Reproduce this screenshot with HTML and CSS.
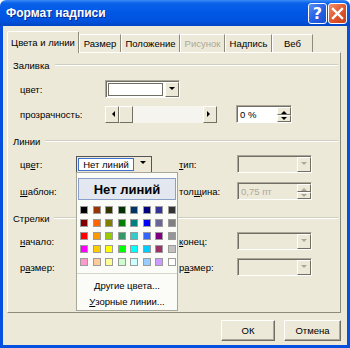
FILE: index.html
```html
<!DOCTYPE html>
<html>
<head>
    <title>Формат надписи</title>
    <link rel="stylesheet" href="styles.css">
</head>
<body>
    <div class="dialog">
        <div class="titlebar">
            <span class="title">Формат надписи</span>
            <div class="caption-btns">
                <span class="cap-btn help">?</span>
                <span class="cap-btn close">
                    <svg width="13" height="13" viewBox="0 0 13 13"><path d="M2 2 L11 11 M11 2 L2 11" stroke="#fff" stroke-width="2.4" stroke-linecap="square"/></svg>
                </span>
            </div>
        </div>
        <div class="window-body">
            <div class="tabs">
                <div class="tab active" style="width:72px">Цвета и линии</div>
                <div class="tab" style="width:42px">Размер</div>
                <div class="tab" style="width:59px">Положение</div>
                <div class="tab disabled" style="width:45px">Рисунок</div>
                <div class="tab" style="width:47px">Надпись</div>
                <div class="tab" style="width:41px">Веб</div>
            </div>
            <div class="panel">
                <div class="group-head g1"><span>Заливка</span><div class="rule"></div></div>
                <div class="row r1">
                    <span class="label wide">цвет:</span>
                    <div class="combo fill-combo">
                        <div class="field"></div>
                        <div class="drop-btn"><i class="arr-down"></i></div>
                    </div>
                </div>
                <div class="row r2">
                    <span class="label wide">прозрачность:</span>
                    <div class="slider">
                        <div class="sbtn"><i class="arr-left"></i></div>
                        <div class="thumb"></div>
                        <div class="track"></div>
                        <div class="sbtn"><i class="arr-right"></i></div>
                    </div>
                    <div class="spin pct">
                        <div class="field">0 %</div>
                        <div class="spin-btns">
                            <div class="sb"><i class="arr-up"></i></div>
                            <div class="sb"><i class="arr-down"></i></div>
                        </div>
                    </div>
                </div>

                <div class="group-head g2"><span>Линии</span><div class="rule"></div></div>
                <div class="row r3">
                    <span class="label">цв<u>е</u>т:</span>
                    <div class="left-ctl">
                        <div class="combo line-combo">
                            <div class="field focus">Нет линий</div>
                            <div class="drop-btn"><i class="arr-down"></i></div>
                        </div>
                    </div>
                    <span class="label right"><u>т</u>ип:</span>
                    <div class="combo off">
                        <div class="field"></div>
                        <div class="drop-btn"><i class="arr-down"></i></div>
                    </div>
                </div>
                <div class="row r4">
                    <span class="label"><u>ш</u>аблон:</span>
                    <div class="left-ctl"></div>
                    <span class="label right">тол<u>щ</u>ина:</span>
                    <div class="spin off">
                        <div class="field">0,75 пт</div>
                        <div class="spin-btns">
                            <div class="sb"><i class="arr-up"></i></div>
                            <div class="sb"><i class="arr-down"></i></div>
                        </div>
                    </div>
                </div>

                <div class="group-head g3"><span>Стрелки</span><div class="rule"></div></div>
                <div class="row r5">
                    <span class="label"><u>н</u>ачало:</span>
                    <div class="left-ctl"></div>
                    <span class="label right"><u>к</u>онец:</span>
                    <div class="combo off">
                        <div class="field"></div>
                        <div class="drop-btn"><i class="arr-down"></i></div>
                    </div>
                </div>
                <div class="row r6">
                    <span class="label">р<u>а</u>змер:</span>
                    <div class="left-ctl"></div>
                    <span class="label right">р<u>а</u>змер:</span>
                    <div class="combo off">
                        <div class="field"></div>
                        <div class="drop-btn"><i class="arr-down"></i></div>
                    </div>
                </div>

                <!-- выпадающая палитра цвета линии -->
                <div class="popup">
                    <div class="no-line">Нет линий</div>
                    <div class="swatches">
                        <i style="background:#000000"></i><i style="background:#993300"></i><i style="background:#333300"></i><i style="background:#003300"></i><i style="background:#003366"></i><i style="background:#000080"></i><i style="background:#333399"></i><i style="background:#333333"></i>
                        <i style="background:#800000"></i><i style="background:#ff6600"></i><i style="background:#808000"></i><i style="background:#008000"></i><i style="background:#008080"></i><i style="background:#0000ff"></i><i style="background:#666699"></i><i style="background:#808080"></i>
                        <i style="background:#ff0000"></i><i style="background:#ff9900"></i><i style="background:#99cc00"></i><i style="background:#339966"></i><i style="background:#33cccc"></i><i style="background:#3366ff"></i><i style="background:#800080"></i><i style="background:#969696"></i>
                        <i style="background:#ff00ff"></i><i style="background:#ffcc00"></i><i style="background:#ffff00"></i><i style="background:#00ff00"></i><i style="background:#00ffff"></i><i style="background:#00ccff"></i><i style="background:#993366"></i><i style="background:#c0c0c0"></i>
                        <i style="background:#ff99cc"></i><i style="background:#ffcc99"></i><i style="background:#ffff99"></i><i style="background:#ccffcc"></i><i style="background:#ccffff"></i><i style="background:#99ccff"></i><i style="background:#cc99ff"></i><i style="background:#ffffff"></i>
                    </div>
                    <div class="sep"></div>
                    <div class="menu-item"><u>Д</u>ругие цвета...</div>
                    <div class="menu-item"><u>У</u>зорные линии...</div>
                </div>
            </div>
            <div class="buttons">
                <div class="btn ok">ОК</div>
                <div class="btn cancel">Отмена</div>
            </div>
        </div>
    </div>
</body>
</html>
```

FILE: styles.css
```css
body {
    margin: 0;
    font-family: "Liberation Sans", Arial, sans-serif;
    font-size: 9.5px;
    color: #000;
}
u {
    text-decoration: underline;
    text-underline-offset: 1px;
}
.dialog {
    width: 350px;
    height: 348px;
    display: flex;
    flex-direction: column;
}

/* заголовок окна */
.titlebar {
    height: 26px;
    flex: none;
    display: flex;
    align-items: center;
    padding-left: 6px;
    background: linear-gradient(to bottom, #3d8cf7 0%, #0a62ea 12%, #0058e6 45%, #0052de 80%, #0046c4 100%);
    border-radius: 6px 6px 0 0;
}
.title {
    color: #fff;
    font-weight: bold;
    font-size: 12px;
    text-shadow: 1px 1px 0 #0b2a8c;
    flex: 1;
}
.caption-btns {
    display: flex;
    gap: 1px;
    margin-right: 3px;
}
.cap-btn {
    width: 17px;
    height: 19px;
    border: 1px solid #fff;
    border-radius: 3px;
    display: flex;
    align-items: center;
    justify-content: center;
    color: #fff;
}
.help {
    background: linear-gradient(135deg, #5a8ff5 0%, #2563e4 50%, #1a4fd0 100%);
    font-weight: bold;
    font-size: 16px;
    font-family: "DejaVu Sans", sans-serif;
}
.close {
    background: linear-gradient(135deg, #f0906a 0%, #e2572f 50%, #c93f1c 100%);
}

.window-body {
    flex: 1;
    background: #ece9d8;
    border: 3px solid #0550df;
    border-top: none;
    display: flex;
    flex-direction: column;
}

/* вкладки */
.tabs {
    display: flex;
    align-items: flex-end;
    height: 21px;
    margin-top: 5px;
    padding-left: 4px;
}
.tab {
    height: 18px;
    box-sizing: border-box;
    border-top: 1px solid #fff;
    border-left: 1px solid #fff;
    border-right: 1px solid #8d8a7e;
    display: flex;
    align-items: center;
    justify-content: center;
    white-space: nowrap;
}
.tab.active {
    height: 22px;
    margin-bottom: -1px;
    background: #ece9d8;
    position: relative;
    z-index: 1;
    border-radius: 2px 2px 0 0;
}
.tab.disabled {
    color: #aca899;
}

/* содержимое вкладки */
.panel {
    position: relative;
    height: 261px;
    box-sizing: border-box;
    margin: 0 6px 0 4px;
    border: 1px solid;
    border-color: #fff #8d8a7e #8d8a7e #fff;
    display: flex;
    flex-direction: column;
}
.group-head {
    display: flex;
    align-items: center;
    height: 14px;
    padding-left: 5px;
    flex: none;
}
.group-head .rule {
    flex: 1;
    margin: 0 2px 0 5px;
    border-top: 1px solid #d0cebf;
    border-bottom: 1px solid #fff;
}
.g1 { margin-top: 5px; }
.g2 { margin-top: 11px; }
.g3 { margin-top: 11px; }
.row {
    display: flex;
    align-items: center;
    height: 18px;
    padding-left: 12px;
    flex: none;
}
.r1 { margin-top: 8px; }
.r2 { margin-top: 7px; }
.r3 { margin-top: 7px; }
.r4 { margin-top: 9px; }
.r5 { margin-top: 7px; }
.r6 { margin-top: 8px; }
.label {
    width: 56px;
    flex: none;
}
.label.wide {
    width: 85px;
}
.left-ctl {
    width: 103px;
    flex: none;
}
.label.right {
    width: 58px;
}

/* поля и кнопки */
.combo, .spin {
    display: flex;
    width: 75px;
    height: 18px;
    box-sizing: border-box;
    border: 1px solid;
    border-color: #aca899 #fff #fff #aca899;
    box-shadow: inset 1px 1px 0 #716f64;
    background: #fff;
    padding: 1px 0 0 1px;
}
.combo .field, .spin .field {
    flex: 1;
    display: flex;
    align-items: center;
    padding-left: 2px;
}
.drop-btn, .sb, .sbtn, .thumb {
    background: #ece9d8;
    box-sizing: border-box;
    border: 1px solid;
    border-color: #fff #716f64 #716f64 #fff;
    display: flex;
    align-items: center;
    justify-content: center;
}
.drop-btn {
    width: 14px;
}
.fill-combo .field {
    margin: 1px 2px 1px 1px;
    border: 1px solid #716f64;
}
.combo.off, .spin.off {
    background: #ece9d8;
    color: #aca899;
}
.spin-btns {
    width: 14px;
    display: flex;
    flex-direction: column;
}
.sb {
    flex: 1;
}
.pct {
    width: 56px;
    margin-left: 19px;
}

.slider {
    display: flex;
    width: 112px;
    height: 17px;
}
.sbtn {
    width: 14px;
}
.thumb {
    width: 14px;
}
.track {
    flex: 1;
    background: #f5f4ef;
}

.line-combo {
    width: 76px;
    height: 17px;
    border: 1px solid #555;
    box-shadow: none;
    padding: 1px;
    background: #ece9d8;
}
.line-combo .field.focus {
    background: #fff;
    border: 1px solid #3b6fd0;
    justify-content: center;
    padding-left: 0;
    margin-right: 2px;
}
.line-combo .drop-btn {
    border-color: #ece9d8;
}

/* стрелки */
i[class^="arr-"] {
    width: 0;
    height: 0;
    border: solid transparent;
    display: block;
}
.arr-down {
    border-width: 4px 3.5px 0 3.5px;
    border-top-color: #000 !important;
}
.off .arr-down {
    border-top-color: #aca899 !important;
}
.sb .arr-down {
    border-width: 3px 3px 0 3px;
}
.arr-up {
    border-width: 0 3px 3px 3px;
    border-bottom-color: #000 !important;
}
.off .arr-up {
    border-bottom-color: #aca899 !important;
}
.arr-left {
    border-width: 3.5px 4px 3.5px 0;
    border-right-color: #000 !important;
}
.arr-right {
    border-width: 3.5px 0 3.5px 4px;
    border-left-color: #000 !important;
}

/* палитра */
.popup {
    position: absolute;
    left: 68px;
    top: 119px;
    width: 102px;
    height: 139px;
    box-sizing: border-box;
    border: 1px solid #a9a79a;
    background: #fbfbf8;
    z-index: 2;
    display: flex;
    flex-direction: column;
}
.no-line {
    margin: 5px 0 0 1px;
    width: 98px;
    height: 22px;
    box-sizing: border-box;
    border: 1px solid #8aa0c8;
    background: #e3e7f0;
    font-weight: bold;
    font-size: 13px;
    display: flex;
    align-items: center;
    justify-content: center;
}
.swatches {
    display: grid;
    grid-template-columns: repeat(8, 8px);
    grid-auto-rows: 8px;
    column-gap: 4.5px;
    row-gap: 5px;
    margin: 6px 0 0 3px;
}
.swatches i {
    display: block;
    border: 1px solid #9c9c9c;
}
.sep {
    margin: 7px 0 0 0;
    border-top: 1px solid #d6d5cc;
}
.menu-item {
    height: 16px;
    display: flex;
    align-items: center;
    justify-content: center;
}
.sep + .menu-item {
    margin-top: 3px;
}

/* кнопки диалога */
.buttons {
    display: flex;
    justify-content: flex-end;
    gap: 9px;
    margin: 7px 6px 0 0;
}
.btn {
    height: 21px;
    box-sizing: border-box;
    border: 1px solid;
    border-color: #fff #716f64 #716f64 #fff;
    box-shadow: inset -1px -1px 0 #aca899;
    display: flex;
    align-items: center;
    justify-content: center;
}
.ok {
    width: 54px;
}
.cancel {
    width: 57px;
}
```
